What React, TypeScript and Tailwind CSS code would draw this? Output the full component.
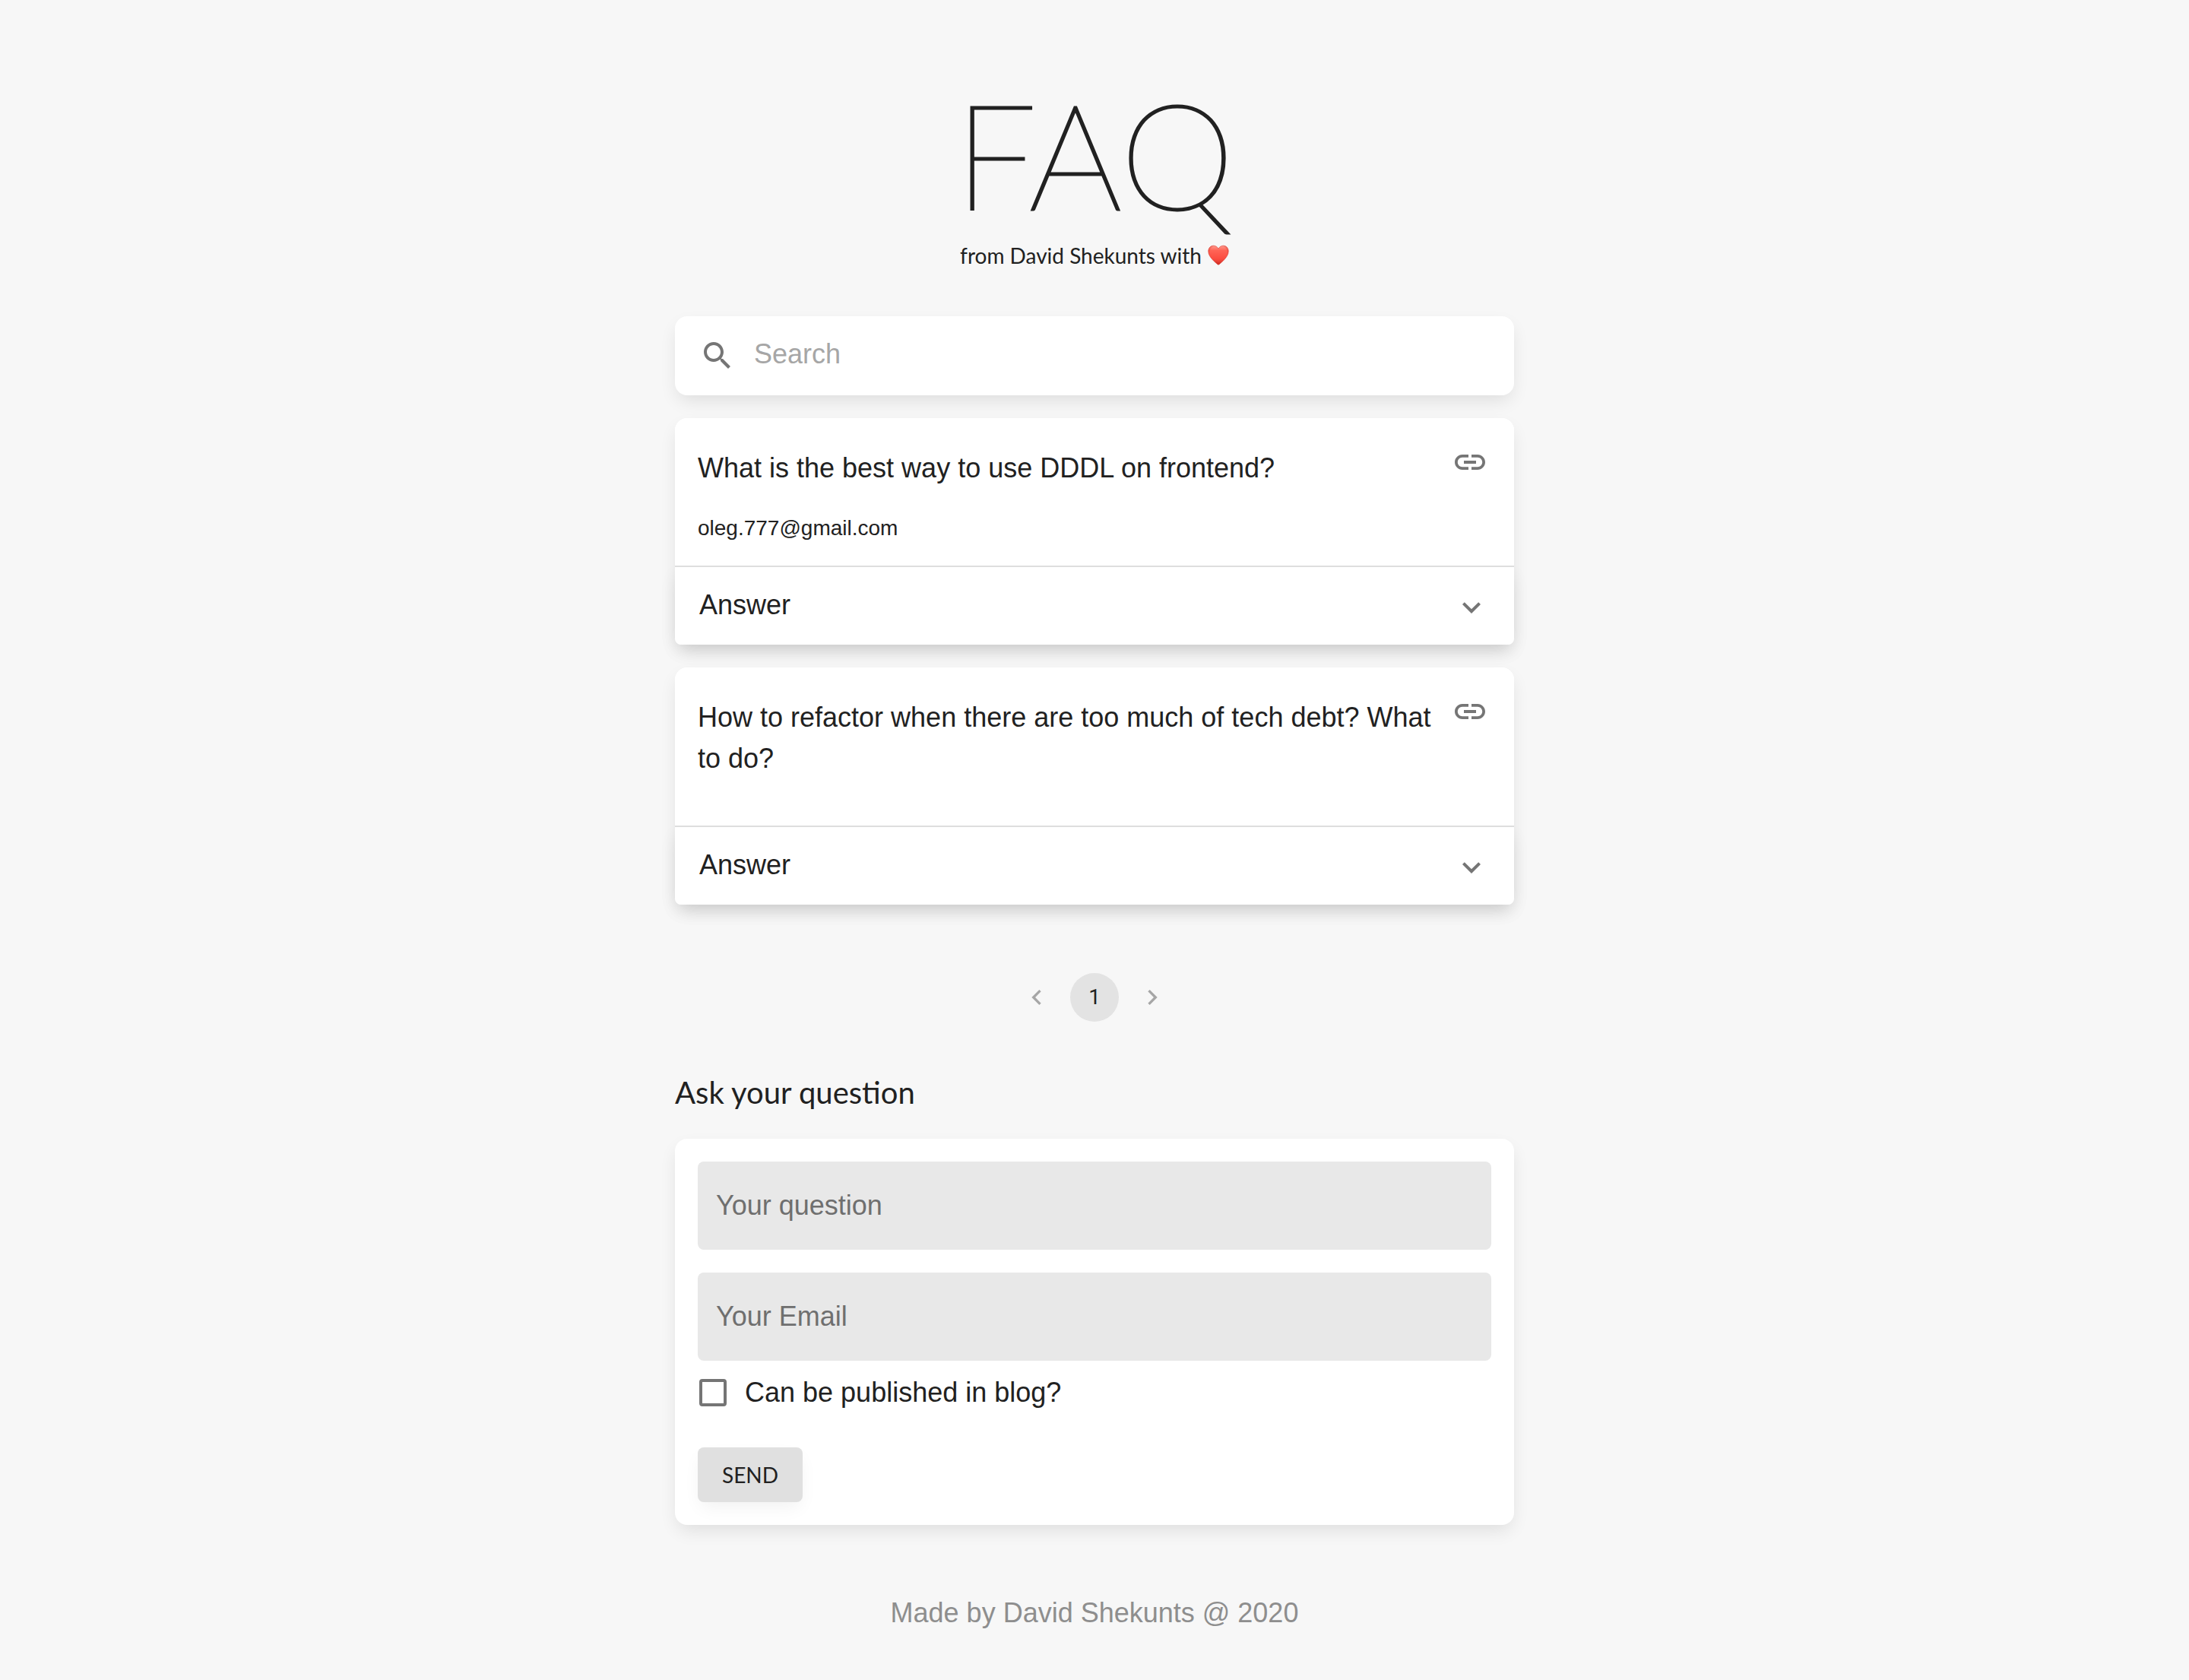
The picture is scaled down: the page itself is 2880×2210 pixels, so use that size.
import { useState } from "react";

type IconProps = { path: string; className: string };

function Icon({ path, className }: IconProps) {
  return (
    <svg viewBox="0 0 24 24" fill="currentColor" aria-hidden="true" className={className}>
      <path d={path} />
    </svg>
  );
}

const icons = {
  search:
    "M15.5 14h-.79l-.28-.27C15.41 12.59 16 11.11 16 9.5 16 5.91 13.09 3 9.5 3S3 5.91 3 9.5 5.91 16 9.5 16c1.61 0 3.09-.59 4.23-1.57l.27.28v.79l5 4.99L20.49 19l-4.99-5zm-6 0C7.01 14 5 11.99 5 9.5S7.01 5 9.5 5 14 7.01 14 9.5 11.99 14 9.5 14z",
  link: "M3.9 12c0-1.71 1.39-3.1 3.1-3.1h4V7H7c-2.76 0-5 2.24-5 5s2.24 5 5 5h4v-1.9H7c-1.71 0-3.1-1.39-3.1-3.1zM8 13h8v-2H8v2zm9-6h-4v1.9h4c1.71 0 3.1 1.39 3.1 3.1s-1.39 3.1-3.1 3.1h-4V17h4c2.76 0 5-2.24 5-5s-2.24-5-5-5z",
  expand: "M16.59 8.59L12 13.17 7.41 8.59 6 10l6 6 6-6z",
  before: "M15.41 7.41L14 6l-6 6 6 6 1.41-1.41L10.83 12z",
  next: "M10 6L8.59 7.41 13.17 12l-4.58 4.59L10 18l6-6z",
};

const heartPath =
  "M14 5.2C12.6 2.6 10.2 1.2 7.5 1.2 3.6 1.2.8 4.3.8 8.6c0 4 2.3 7.6 5.6 11.1 2.2 2.4 4.8 4.6 6.5 6 .7.6 1.5.6 2.2 0 1.7-1.4 4.3-3.6 6.5-6 3.3-3.5 5.6-7.1 5.6-11.1 0-4.3-2.8-7.4-6.7-7.4-2.7 0-5.100 1.4-6.5 4z";

function Heart() {
  return (
    <svg viewBox="0 0 28 28" role="img" aria-label="heart" className="h-7 w-7">
      <defs>
        <linearGradient id="heart-fill" x1="0" y1="0" x2="0" y2="1">
          <stop offset="0" stopColor="#ff9a8e" />
          <stop offset="0.25" stopColor="#ff6456" />
          <stop offset="0.7" stopColor="#fb4c40" />
          <stop offset="1" stopColor="#d0342a" />
        </linearGradient>
        <radialGradient id="heart-edge" cx="0.5" cy="0.4" r="0.6">
          <stop offset="0.7" stopColor="#cf2a1e" stopOpacity="0" />
          <stop offset="1" stopColor="#cf2a1e" stopOpacity="0.6" />
        </radialGradient>
      </defs>
      <path d={heartPath} fill="url(#heart-fill)" />
      <path d={heartPath} fill="url(#heart-edge)" stroke="#d8382c" strokeWidth="0.6" />
    </svg>
  );
}

const questions = [
  { text: "What is the best way to use DDDL on frontend?", email: "oleg.777@gmail.com" },
  { text: "How to refactor when there are too much of tech debt? What to do?", email: "" },
];

function QuestionCard({ text, email }: { text: string; email: string }) {
  return (
    <article className="rounded-t-2xl rounded-b-lg bg-white shadow-[0_10px_24px_-4px_rgba(0,0,0,0.11)]">
      <div className="relative z-10 flex items-start rounded-t-2xl bg-white px-[30px] pt-[30px] pb-[29px]">
        <div className="flex-1 pt-[9px]">
          <h2 className="text-[36px] leading-[54px]">{text}</h2>
          <p className="mt-8 text-[28px] leading-10">{email}</p>
        </div>
        <button type="button" aria-label="Copy link" className="p-1 text-[#757575]">
          <Icon path={icons.link} className="h-12 w-12" />
        </button>
      </div>
      <button
        type="button"
        aria-expanded="false"
        className="block w-full rounded-b-lg bg-white text-left text-[36px] leading-[54px] shadow-[0_10px_24px_-4px_rgba(0,0,0,0.11)]"
      >
        <span className="flex items-end justify-between border-t-2 border-[#dedede] px-8 pt-[23px] pb-[25px]">
          Answer
          <Icon path={icons.expand} className="h-12 w-12 text-[#757575]" />
        </span>
      </button>
    </article>
  );
}

export default function App() {
  const [publish, setPublish] = useState(false);
  const field =
    "block h-[116px] w-full rounded-lg bg-[#e8e8e8] px-6 text-[36px] leading-[54px] outline-none placeholder:text-[#6f6f6f] placeholder:opacity-100";

  return (
    <div className="min-h-screen bg-[#f7f7f7] px-8 pt-[90px] pb-12 font-['Liberation_Sans',Arial,sans-serif] text-[#212121]">
      <div className="mx-auto max-w-[1104px]">
        <header className="flex flex-col items-center font-['Lato',sans-serif]">
          <h1 className="text-[192px] leading-[224px] font-thin [-webkit-text-stroke:3px_#212121]">FAQ</h1>
          <p className="flex items-center gap-2 text-[28px] leading-[44px]">
            from David Shekunts with <Heart />
          </p>
        </header>

        <main>
          <label className="mt-[58px] flex h-[104px] items-center gap-6 rounded-2xl bg-white px-8 shadow-[0_10px_24px_-4px_rgba(0,0,0,0.11)]">
            <Icon path={icons.search} className="h-12 w-12 text-[#757575]" />
            <input
              type="search"
              aria-label="Search"
              placeholder="Search"
              className="min-w-0 flex-1 bg-transparent pb-1 text-[36px] leading-[54px] outline-none placeholder:text-[#a6a6a6] placeholder:opacity-100"
            />
          </label>

          <section aria-label="Questions" className="mt-[30px] flex flex-col gap-[30px]">
            {questions.map((q) => (
              <QuestionCard key={q.text} text={q.text} email={q.email} />
            ))}
          </section>

          <nav aria-label="Pagination" className="mt-[90px] flex justify-center gap-3">
            <button type="button" disabled aria-label="Previous page" className="flex h-16 w-16 items-center justify-center text-[#a6a6a6]">
              <Icon path={icons.before} className="h-10 w-10" />
            </button>
            <button type="button" aria-current="page" className="h-16 w-16 rounded-full bg-[#e3e3e3] font-['Roboto',sans-serif] text-[28px] leading-10">
              1
            </button>
            <button type="button" disabled aria-label="Next page" className="flex h-16 w-16 items-center justify-center text-[#a6a6a6]">
              <Icon path={icons.next} className="h-10 w-10" />
            </button>
          </nav>

          <h2 className="mt-[61px] font-['Lato',sans-serif] text-[40px] leading-[64px]">Ask your question</h2>

          <form
            onSubmit={(e) => e.preventDefault()}
            className="mt-[29px] flex flex-col items-start rounded-2xl bg-white p-[30px] shadow-[0_10px_24px_-4px_rgba(0,0,0,0.11)]"
          >
            <input type="text" aria-label="Your question" placeholder="Your question" className={field} />
            <div className="mt-[30px] w-full">
              <input type="email" aria-label="Your Email" placeholder="Your Email" className={field} />
            </div>
            <label className="mt-[15px] flex items-center gap-6 pl-0.5 text-[36px] leading-[54px]">
              <input
                type="checkbox"
                checked={publish}
                onChange={(e) => setPublish(e.target.checked)}
                className="h-9 w-9 appearance-none rounded border-4 border-[#757575] checked:bg-[#757575]"
              />
              Can be published in blog?
            </label>
            <button
              type="submit"
              className="mt-[45px] h-[72px] rounded-lg bg-[#e0e0e0] px-8 font-['Lato',sans-serif] text-[28px] leading-[48px] shadow-[0_10px_24px_-4px_rgba(0,0,0,0.06)]"
            >
              SEND
            </button>
          </form>
        </main>

        <footer className="mt-[89px] text-center text-[36px] leading-[54px] text-[#8e8e8e]">
          Made by David Shekunts @ 2020
        </footer>
      </div>
    </div>
  );
}
